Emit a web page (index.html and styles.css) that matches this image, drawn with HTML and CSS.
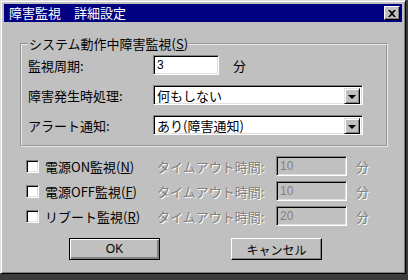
FILE: index.html
```html
<!DOCTYPE html>
<html lang="ja">
<head>
    <meta charset="UTF-8">
    <title>障害監視 詳細設定</title>
    <link rel="stylesheet" href="styles.css">
</head>
<body>
<div class="window">
    <div class="titlebar">
        <span class="title">障害監視　詳細設定</span>
        <span class="close">
            <svg width="8" height="7" viewBox="0 0 8 7"><path d="M0 0h2l2 2 2-2h2L5 3.5 8 7H6L4 5 2 7H0l3-3.5z" fill="#000"/></svg>
        </span>
    </div>
    <div class="content">
        <fieldset class="group">
            <legend>システム動作中障害監視(<u>S</u>)</legend>
            <div class="row">
                <label class="lbl">監視周期:</label>
                <div class="field short">3</div>
                <span class="unit">分</span>
            </div>
            <div class="row">
                <label class="lbl">障害発生時処理:</label>
                <div class="field combo"><span class="val">何もしない</span><span class="drop"><i></i></span></div>
            </div>
            <div class="row">
                <label class="lbl">アラート通知:</label>
                <div class="field combo"><span class="val">あり(障害通知)</span><span class="drop"><i></i></span></div>
            </div>
        </fieldset>

        <div class="checks">
            <div class="check"><span class="box"></span>電源ON監視(<u>N</u>)</div>
            <span class="off">タイムアウト時間:</span>
            <div class="field dis">10</div>
            <span class="off unit">分</span>

            <div class="check"><span class="box"></span>電源OFF監視(<u>F</u>)</div>
            <span class="off">タイムアウト時間:</span>
            <div class="field dis">10</div>
            <span class="off unit">分</span>

            <div class="check"><span class="box"></span>リブート監視(<u>R</u>)</div>
            <span class="off">タイムアウト時間:</span>
            <div class="field dis">20</div>
            <span class="off unit">分</span>
        </div>

        <div class="buttons">
            <div class="btn default"><span>OK</span></div>
            <div class="btn"><span>キャンセル</span></div>
        </div>
    </div>
</div>
</body>
</html>
```
FILE: styles.css
```css
body {
    margin: 0;
    background: #3c3c3c;
    font-family: "Noto Sans CJK JP", "Noto Sans", sans-serif;
    font-size: 12px;
    color: #000;
}

.window {
    width: 406px;
    height: 274px;
    box-sizing: border-box;
    background: #c0c0c0;
    border: 1px solid;
    border-color: #dfdfdf #000 #000 #dfdfdf;
    box-shadow: inset 1px 1px #fff, inset -1px -1px #808080;
    padding: 3px;
    display: flex;
    flex-direction: column;
}

.titlebar {
    height: 18px;
    background: #000080;
    color: #fff;
    display: flex;
    align-items: center;
    justify-content: space-between;
    padding: 0 2px 0 5px;
}

.title {
    font-size: 13px;
    line-height: 18px;
}

.close {
    width: 16px;
    height: 14px;
    box-sizing: border-box;
    background: #c0c0c0;
    border: 1px solid;
    border-color: #fff #000 #000 #fff;
    box-shadow: inset -1px -1px #808080;
    display: flex;
    align-items: center;
    justify-content: center;
}

.content {
    padding: 14px 14px 0 16px;
}

.group {
    margin: 0;
    padding: 3px 6px 10px 6px;
    border: 2px groove #e8e8e8;
    display: flex;
    flex-direction: column;
    gap: 10px;
}

.group legend {
    padding: 0 1px;
    font-size: 13px;
    line-height: 16px;
}

.row {
    display: flex;
    align-items: center;
    height: 20px;
}

.lbl {
    width: 125px;
    font-size: 13px;
}

.field {
    height: 20px;
    box-sizing: border-box;
    background: #fff;
    border: 1px solid;
    border-color: #808080 #fff #fff #808080;
    box-shadow: inset 1px 1px #000, inset -1px -1px #dfdfdf;
    padding: 0 3px;
    line-height: 18px;
    font-family: "Liberation Sans", "Noto Sans CJK JP", sans-serif;
    font-size: 12px;
}

.short {
    width: 66px;
}

.unit {
    margin-left: 14px;
    font-size: 13px;
}

.combo {
    width: 210px;
    display: flex;
    justify-content: space-between;
    padding: 2px 2px 2px 3px;
    font-family: "Noto Sans CJK JP", sans-serif;
    font-size: 13px;
}

.combo .val {
    line-height: 16px;
}

.drop {
    width: 16px;
    height: 16px;
    box-sizing: border-box;
    background: #c0c0c0;
    border: 1px solid;
    border-color: #dfdfdf #000 #000 #dfdfdf;
    box-shadow: inset 1px 1px #fff, inset -1px -1px #808080;
    display: flex;
    align-items: center;
    justify-content: center;
}

.drop i {
    width: 0;
    height: 0;
    border-left: 4px solid transparent;
    border-right: 4px solid transparent;
    border-top: 4px solid #000;
    margin-top: 1px;
}

.checks {
    margin-top: 9px;
    padding-left: 6px;
    display: grid;
    grid-template-columns: 131px 119px 71px auto;
    grid-auto-rows: 20px;
    row-gap: 5px;
    align-items: center;
    font-size: 13px;
}

.check {
    display: flex;
    align-items: center;
}

.box {
    width: 13px;
    height: 13px;
    box-sizing: border-box;
    background: #fff;
    border: 1px solid;
    border-color: #808080 #fff #fff #808080;
    box-shadow: inset 1px 1px #000, inset -1px -1px #dfdfdf;
    margin-right: 6px;
}

.off {
    color: #808080;
    text-shadow: 1px 1px #fff;
}

.dis {
    background: #c0c0c0;
    color: #808080;
}

.checks .unit {
    margin-left: 9px;
}

.buttons {
    margin-top: 12px;
    padding-left: 49px;
    display: flex;
    gap: 71px;
}

.btn {
    width: 91px;
    height: 22px;
    box-sizing: border-box;
    background: #c0c0c0;
    border: 1px solid;
    border-color: #fff #000 #000 #fff;
    box-shadow: inset -1px -1px #808080;
    display: flex;
    align-items: center;
    justify-content: center;
    font-size: 12px;
}

.btn.default {
    border: 1px solid #000;
    box-shadow: inset 1px 1px #fff, inset -2px -2px #808080;
    font-family: "Liberation Sans", sans-serif;
}
```
